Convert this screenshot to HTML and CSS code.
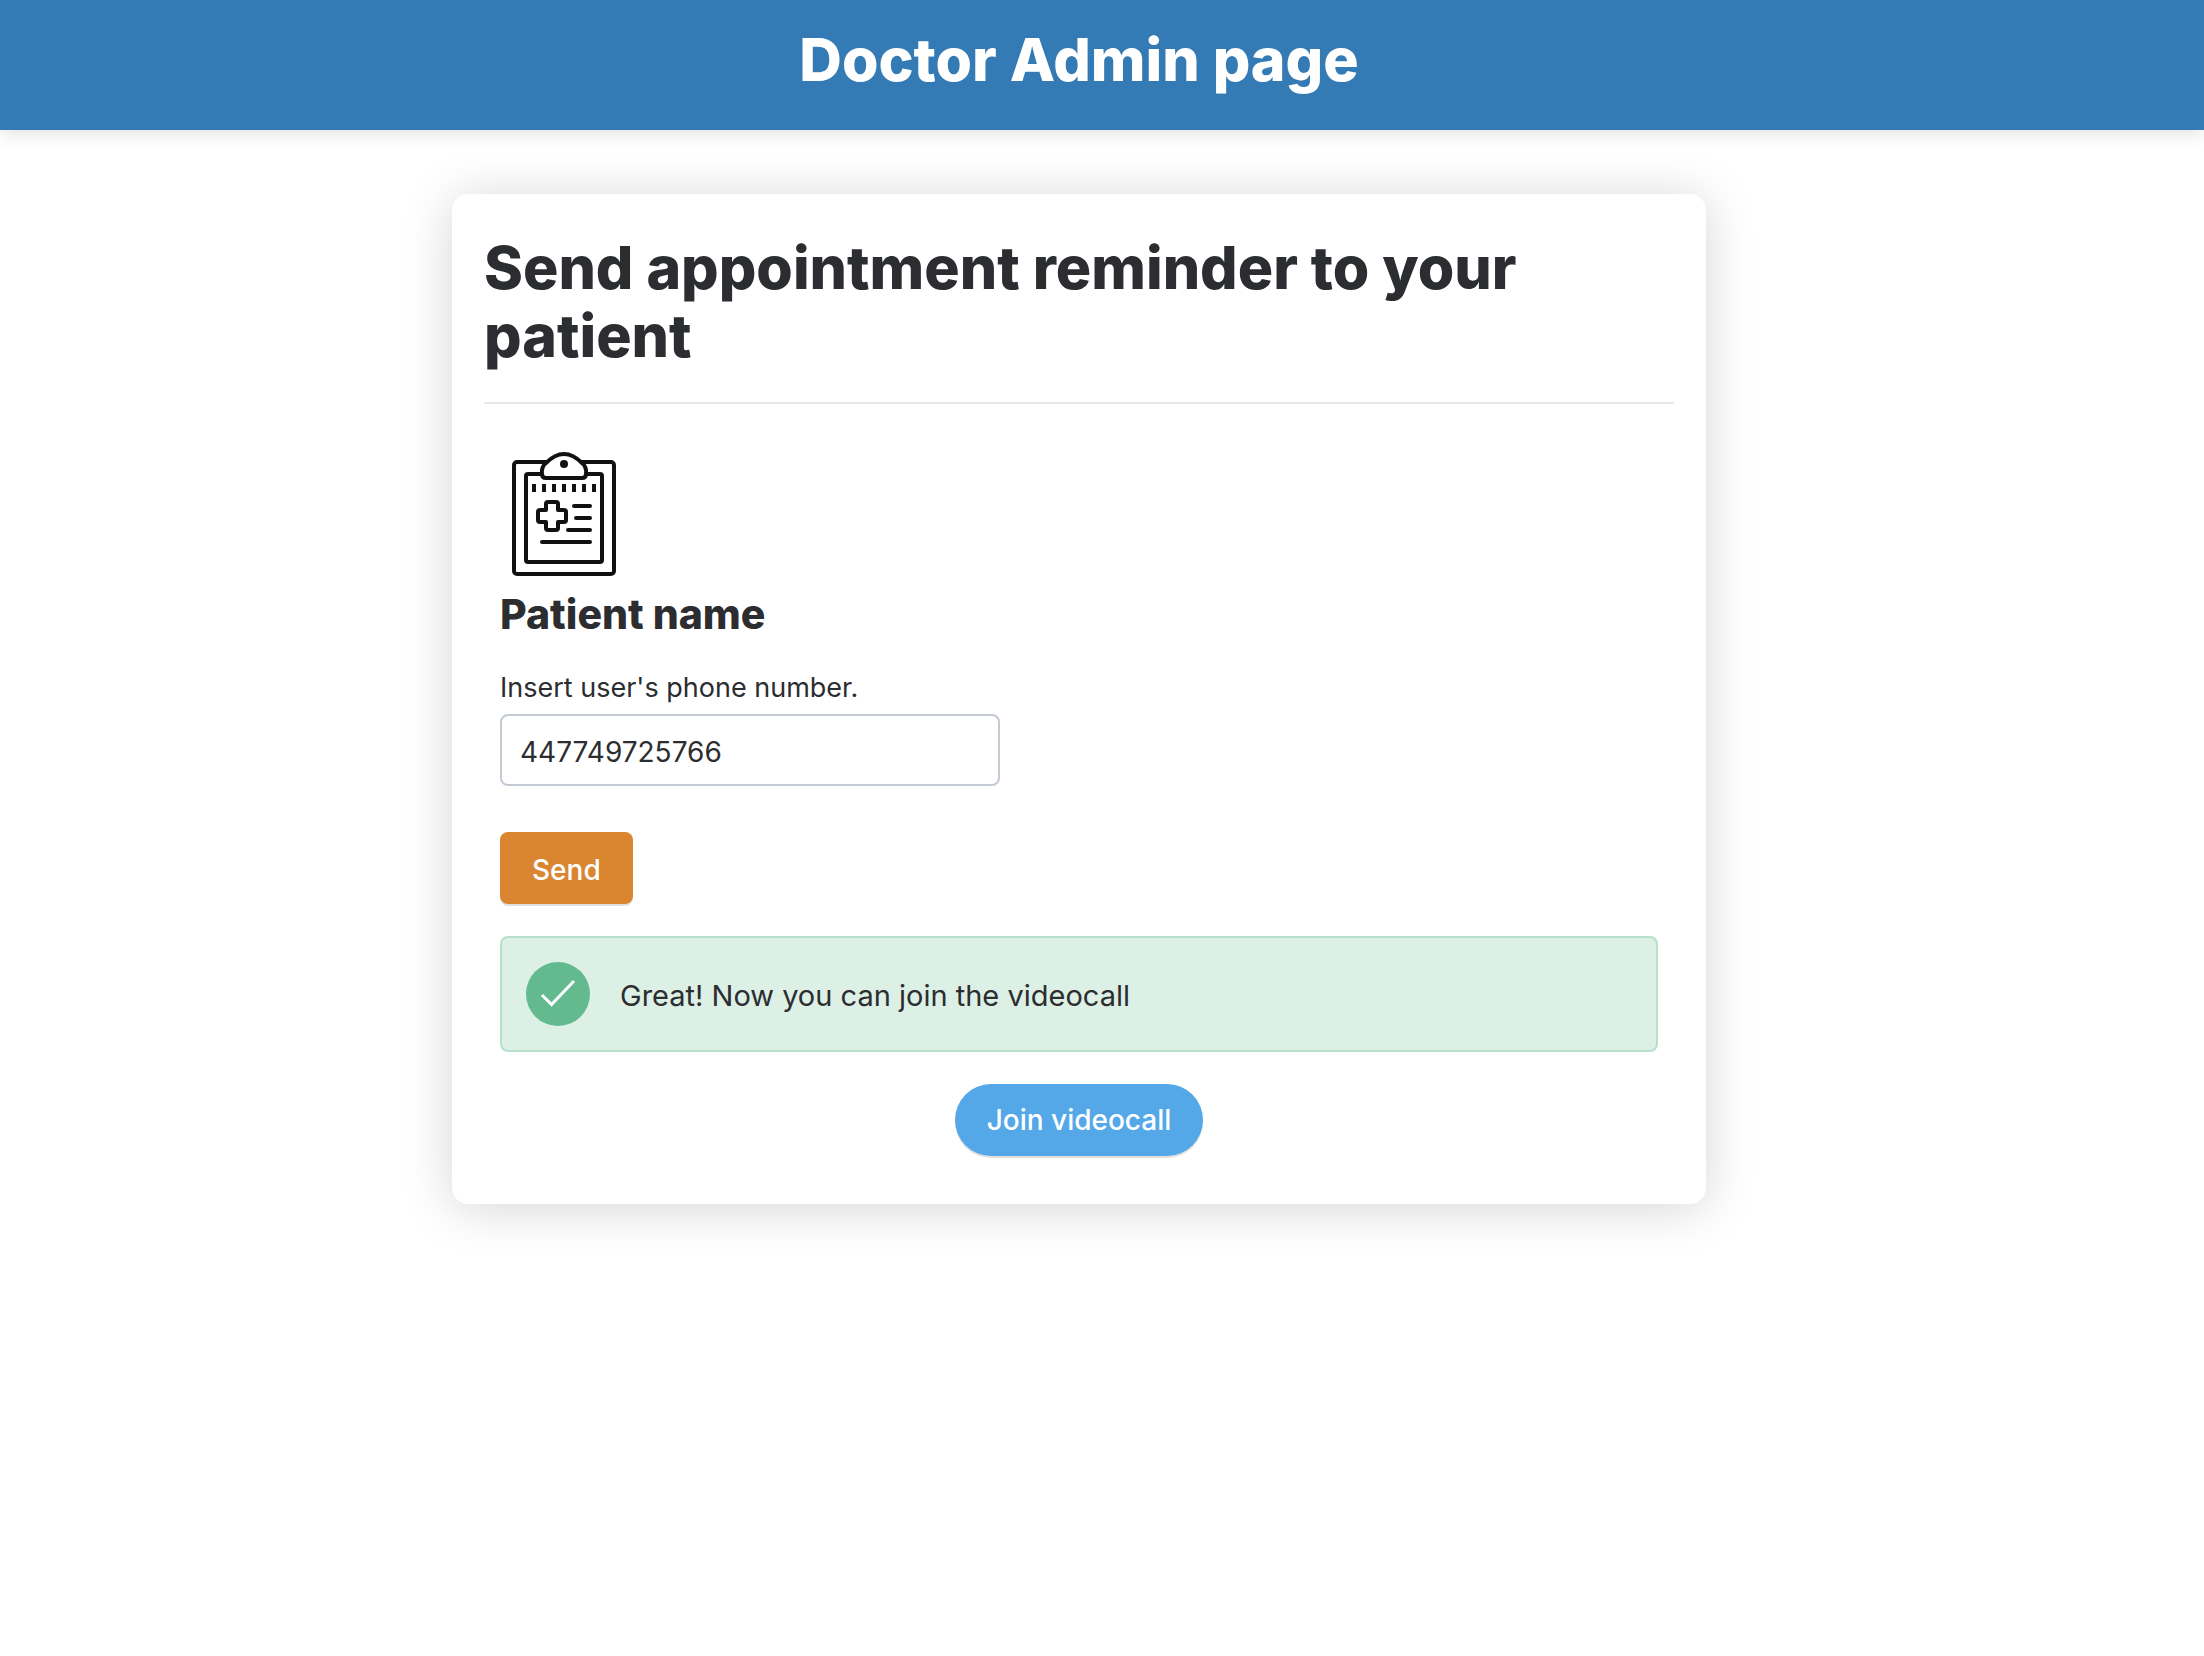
FILE: index.html
```html
<!DOCTYPE html>
<html lang="en">
<head>
  <meta charset="utf-8">
  <meta name="viewport" content="width=device-width, initial-scale=1">
  <title>Doctor Admin page</title>
  <link rel="stylesheet" href="styles.css">
</head>
<body>
  <header class="topbar">
    <h1 class="topbar-title">Doctor Admin page</h1>
  </header>
  <main class="page">
    <section class="card">
      <h2 class="card-title">Send appointment reminder to your patient</h2>
      <div class="card-content">
        <svg class="clipboard" viewBox="0 0 128 128" fill="none" stroke="#111" stroke-width="4" stroke-linecap="round" stroke-linejoin="round" aria-hidden="true">
          <rect x="14" y="12" width="100" height="112" rx="3"/>
          <rect x="26" y="24" width="76" height="88" rx="2"/>
          <path fill="#fff" d="M46 28H82Q86 28 86 24Q87 17 82 13Q73 4 64 4Q55 4 46 13Q41 17 42 24Q42 28 46 28Z"/>
          <circle cx="64" cy="14" r="4" fill="#111" stroke="none"/>
          <path stroke-linecap="butt" d="M34 34v8M44 34v8M54 34v8M64 34v8M74 34v8M84 34v8M94 34v8"/>
          <path d="M48 52h8q2 0 2 2v6h6q2 0 2 2v8q0 2-2 2h-6v6q0 2-2 2h-8q-2 0-2-2v-6h-6q-2 0-2-2v-8q0-2 2-2h6v-6q0-2 2-2z"/>
          <path d="M74 56h16M76 68h14M68 80h22M42 92h48"/>
        </svg>
        <h3 class="patient">Patient name</h3>
        <form class="form">
          <label class="label" for="phone">Insert user's phone number.</label>
          <input class="input" id="phone" type="tel" value="447749725766">
          <button class="button send" type="button">Send</button>
        </form>
        <div class="alert" role="status">
          <svg class="check" viewBox="0 0 64 64" fill="none" aria-hidden="true">
            <circle cx="32" cy="32" r="32" fill="#63ba8f"/>
            <path d="M16 33L25.500 42.500L48 19" stroke="#fff" stroke-width="3"/>
          </svg>
          <p class="alert-text">Great! Now you can join the videocall</p>
        </div>
        <button class="button join" type="button">Join videocall</button>
      </div>
    </section>
  </main>
</body>
</html>
```
FILE: styles.css
```css
* {
  box-sizing: border-box;
}

body {
  margin: 0;
  background: #fff;
  color: #2c2d30;
  font-family: Inter, "Liberation Sans", sans-serif;
  font-size: 28px;
  line-height: 40px;
}

h1,
h2,
h3,
p {
  margin: 0;
}

.topbar {
  padding: 26px 46px 36px 0;
  background: #347ab4;
  box-shadow: 0 2px 18px rgba(0, 0, 0, 0.14);
  text-align: center;
}

.topbar-title,
.card-title {
  font-size: 59px;
  font-weight: 800;
  line-height: 68px;
}

.topbar-title {
  color: #fff;
}

.page {
  padding: 64px 46px 64px 0;
}

.card {
  max-width: 1254px;
  margin: 0 auto;
  padding: 40px 32px 48px;
  border-radius: 16px;
  background: #fff;
  box-shadow: 0 4px 50px rgba(0, 0, 0, 0.17);
}

.card-title {
  padding-bottom: 32px;
  border-bottom: 2px solid #e8e8e8;
}

.card-content {
  display: flex;
  flex-direction: column;
  padding: 46px 16px 0;
}

.clipboard {
  width: 128px;
  height: 128px;
}

.patient {
  margin-top: 12px;
  font-size: 41px;
  font-weight: 800;
  line-height: 48px;
}

.form {
  display: flex;
  flex-direction: column;
  align-items: flex-start;
  margin-top: 30px;
}

.label {
  font-size: 27px;
}

.input {
  width: 500px;
  max-width: 100%;
  height: 72px;
  margin-top: 6px;
  padding: 4px 18px 0;
  border: 2px solid #c2cbd4;
  border-radius: 8px;
  background: #fff;
  color: inherit;
  font: inherit;
}

.button {
  height: 72px;
  padding: 4px 32px 0;
  border: 0;
  color: #fff;
  font: inherit;
  font-weight: 500;
  box-shadow: 0 2px 0 rgba(0, 0, 0, 0.12);
}

.send {
  margin-top: 46px;
  border-radius: 8px;
  background: #da8530;
}

.alert {
  display: flex;
  align-items: flex-start;
  gap: 30px;
  margin-top: 32px;
  padding: 24px;
  border: 2px solid #b5e1cd;
  border-radius: 8px;
  background: #dcf0e6;
}

.check {
  flex: none;
  width: 64px;
  height: 64px;
}

.alert-text {
  padding-top: 14px;
  font-size: 29px;
}

.join {
  align-self: center;
  margin-top: 32px;
  padding-top: 0;
  border-radius: 36px;
  background: #54a8e8;
}
```
